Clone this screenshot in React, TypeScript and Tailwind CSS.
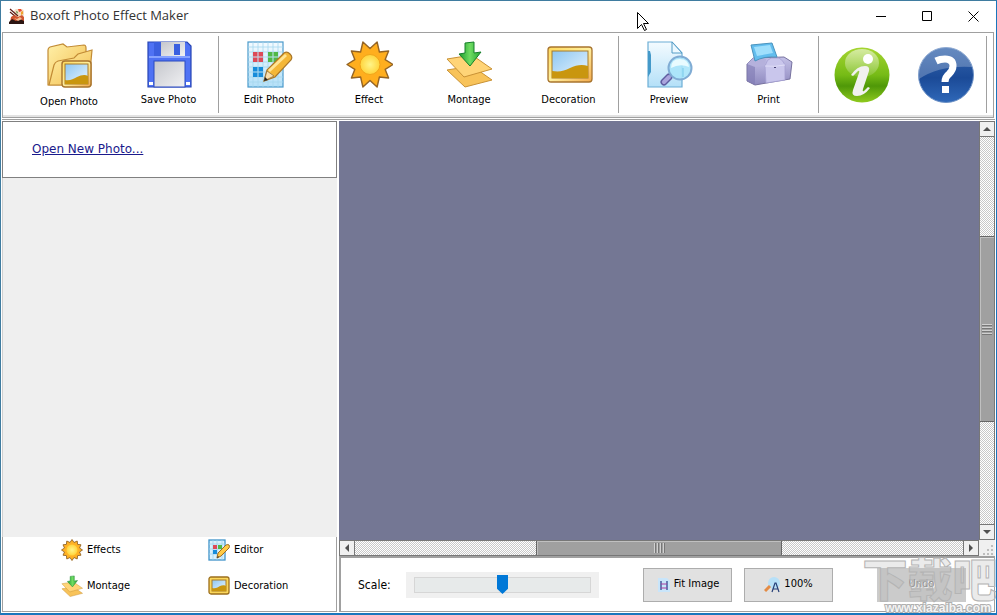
import { ReactNode } from "react";

type IconProps = { className?: string };

const AppIcon = () => (
  <svg viewBox="0 0 16 16" className="w-4 h-4" aria-hidden="true">
    <rect x="5" y="1" width="10" height="8" rx="3" fill="#f3dcc4" />
    <path d="M1 1l8 7M1 4l6 5" stroke="#5d1c16" strokeWidth="1.2" />
    <path d="M9 1h3l1 2-3 1z" fill="#e9482c" />
    <path d="M12 4l2-1v3l-2 1z" fill="#f0a22b" />
    <path d="M7 3l2 1-1 2z" fill="#4f8a3c" />
    <path d="M2 9l3-2 4 2 4-2 2 2v6H1z" fill="#d0552f" />
    <path d="M0 14l3-3 4 2 4-2 2 1 2 1v3H0z" fill="#2c1512" />
    <path d="M5 10l3 1 3-2 2 2-4 2z" fill="#f6bd92" />
  </svg>
);

const Gradients = () => (
  <svg className="absolute w-0 h-0" aria-hidden="true">
    <defs>
      <linearGradient id="gold" x1="0" y1="0" x2="1" y2="1">
        <stop offset="0" stopColor="#fff0a8" />
        <stop offset="1" stopColor="#f2bd4e" />
      </linearGradient>
      <linearGradient id="frame" x1="0" y1="0" x2="1" y2="1">
        <stop offset="0" stopColor="#ffd95a" />
        <stop offset="0.5" stopColor="#fff0a0" />
        <stop offset="1" stopColor="#f3a94b" />
      </linearGradient>
      <linearGradient id="sky" x1="0" y1="0" x2="1" y2="1">
        <stop offset="0" stopColor="#8dc6f2" />
        <stop offset="1" stopColor="#eaf6ff" />
      </linearGradient>
      <linearGradient id="sheet" x1="0" y1="0" x2="0" y2="1">
        <stop offset="0" stopColor="#f4fbff" />
        <stop offset="1" stopColor="#b4e0f8" />
      </linearGradient>
      <linearGradient id="metal" x1="0" y1="0" x2="1" y2="1">
        <stop offset="0" stopColor="#c4c6cc" />
        <stop offset="1" stopColor="#f1f1f3" />
      </linearGradient>
      <radialGradient id="sun">
        <stop offset="0" stopColor="#fff58a" />
        <stop offset="1" stopColor="#ffd43c" />
      </radialGradient>
      <linearGradient id="arrow" x1="0" y1="0" x2="1" y2="0">
        <stop offset="0" stopColor="#1c9c2c" />
        <stop offset="0.5" stopColor="#6fdc62" />
        <stop offset="1" stopColor="#25a534" />
      </linearGradient>
      <linearGradient id="printer" x1="0" y1="0" x2="0" y2="1">
        <stop offset="0" stopColor="#c4c1e8" />
        <stop offset="1" stopColor="#8f8abf" />
      </linearGradient>
      <linearGradient id="info" x1="0" y1="0" x2="0" y2="1">
        <stop offset="0" stopColor="#a5d531" />
        <stop offset="0.5" stopColor="#76bb16" />
        <stop offset="0.7" stopColor="#4f9808" />
        <stop offset="1" stopColor="#8fca1e" />
      </linearGradient>
      <linearGradient id="help" x1="0" y1="0" x2="0" y2="1">
        <stop offset="0" stopColor="#3566ad" />
        <stop offset="0.55" stopColor="#1b4a97" />
        <stop offset="1" stopColor="#2f68b8" />
      </linearGradient>
      <linearGradient id="gloss" x1="0" y1="0" x2="0" y2="1">
        <stop offset="0" stopColor="#ffffff" stopOpacity="0.55" />
        <stop offset="1" stopColor="#ffffff" stopOpacity="0.12" />
      </linearGradient>
    </defs>
  </svg>
);

const OpenIcon = ({ className }: IconProps) => (
  <svg viewBox="0 0 48 48" className={className} aria-hidden="true">
    <path d="M3 44V9q0-2 2-3l13-3 4 3 17-2q2 0 2 3v6L25 44z" fill="url(#gold)" stroke="#c28b35" strokeWidth="1.2" />
    <path d="M4 44l5-20q1-3 4-4l16-3 4-4 14-4-1 11v24H22z" fill="url(#gold)" stroke="#c28b35" strokeWidth="1.2" />
    <rect x="17" y="20" width="29" height="26" rx="3" fill="url(#frame)" stroke="#a8742e" strokeWidth="1.4" />
    <rect x="20" y="23" width="23" height="20" fill="url(#sky)" stroke="#a87a26" />
    <path d="M20 39c5 1 8-1 12-3 4-2 8-3 11-1v8H20z" fill="#c9960f" />
  </svg>
);

const SaveIcon = ({ className }: IconProps) => (
  <svg viewBox="0 0 48 48" className={className} aria-hidden="true">
    <path d="M3 2h39l4 4v41H3z" fill="#4f72f4" stroke="#2745b5" strokeWidth="1.2" />
    <rect x="9" y="2" width="7" height="14" fill="#3c60e0" />
    <rect x="16" y="2" width="24" height="14" fill="url(#metal)" />
    <rect x="29" y="4" width="6" height="11" fill="#3a5fe0" />
    <path d="M4 17h41" stroke="#86a2ff" strokeWidth="2" />
    <rect x="9" y="21" width="31" height="26" fill="url(#metal)" stroke="#2b4bc0" />
    <rect x="4" y="42" width="4" height="3" fill="#fff" />
    <rect x="41" y="42" width="4" height="3" fill="#fff" />
  </svg>
);

const EditIcon = ({ className }: IconProps) => (
  <svg viewBox="0 0 48 48" className={className} aria-hidden="true">
    <rect x="3" y="2" width="35" height="45" fill="url(#sheet)" stroke="#4a9acb" strokeWidth="1.2" />
    <path d="M8 2v45M13 2v45M18 2v45M23 2v45M28 2v45M33 2v45M3 7h35M3 12h35M3 17h35M3 22h35M3 27h35M3 32h35M3 37h35M3 42h35" stroke="#a5d7ef" strokeWidth=".8" />
    <path d="M8 12h4.500v4.500H8zM13.500 12H18v4.500h-4.500zM8 17.500h4.500V22H8zM13.500 17.500H18V22h-4.500z" fill="#dd4a58" />
    <path d="M23 12h4.500v4.500H23zM28.500 12H33v4.500h-4.500zM23 17.500h4.500V22H23zM28.500 17.500H33V22h-4.500z" fill="#51b848" />
    <path d="M8 27h4.500v4.500H8zM13.500 27H18v4.500h-4.500zM8 32.500h4.500V37H8zM13.500 32.500H18V37h-4.500z" fill="#168cda" />
    <path d="M19 41l3-11 17-17q3-2 6 1t1 6L30 37z" fill="#f4b738" stroke="#a97629" strokeWidth="1.2" />
    <path d="M24 31l17-16" stroke="#ffe596" strokeWidth="3" />
    <path d="M19 41l3-10 7 5z" fill="#f9dfad" stroke="#8a6a3a" strokeWidth=".7" />
    <path d="M19 41l1-4 3 3z" fill="#222" />
  </svg>
);

const SmallEditIcon = ({ className }: IconProps) => (
  <svg viewBox="0 0 22 22" className={className} aria-hidden="true">
    <rect x="1" y="1" width="16" height="20" fill="#d8f0fc" stroke="#3f93c9" strokeWidth="1.3" />
    <path d="M5 1v20M9 1v20M14 1v20M1 5h16M1 10h16M1 15h16" stroke="#a0d2ee" strokeWidth=".8" />
    <rect x="5" y="6" width="4" height="4" fill="#dd4a58" />
    <rect x="10" y="6" width="4" height="4" fill="#51b848" />
    <rect x="5" y="11" width="4" height="4" fill="#168cda" />
    <path d="M9 19l1-5 8-8q2-1 3 0t0 3l-8 8z" fill="#ffca45" stroke="#a06c22" />
    <path d="M9 19l1-2 1 1z" fill="#222" />
  </svg>
);

const SunIcon = ({ className }: IconProps) => (
  <svg viewBox="0 0 48 48" className={className} aria-hidden="true">
    <path
      d="M48 24.500L40.200 29.400 43.600 38 34.400 37 32.100 47 25 40.500 17.900 47 15.600 37 6.400 38 9.800 29.400 2 24.500 9.800 19.600 6.400 11 15.600 12 17.900 2 25 8.500 32.100 2 34.400 12 43.600 11 40.200 19.600z"
      fill="#ffae1e"
      stroke="#946425"
      strokeWidth="1.4"
      strokeLinejoin="round"
    />
    <circle cx="25" cy="24.500" r="10" fill="url(#sun)" stroke="#f0a51b" />
  </svg>
);

const SmallSunIcon = ({ className }: IconProps) => (
  <svg viewBox="0 0 22 22" className={className} aria-hidden="true">
    <path
      d="M21.500 11L18.500 13 20 16.200 16.600 16.600 16.200 20 13 18.500 11 21.500 9 18.500 5.800 20 5.400 16.600 2 16.200 3.500 13 .5 11 3.500 9 2 5.800 5.400 5.400 5.800 2 9 3.500 11 .5 13 3.500 16.200 2 16.600 5.400 20 5.800 18.500 9z"
      fill="#ffb224"
      stroke="#946425"
      strokeWidth=".9"
    />
    <circle cx="11" cy="11" r="5.500" fill="url(#sun)" />
  </svg>
);

const MontageIcon = ({ className }: IconProps) => (
  <svg viewBox="0 0 48 48" className={className} aria-hidden="true">
    <path d="M2 30l25-4 20 14-27 7z" fill="#f8c35a" stroke="#c99235" />
    <path d="M2 19l25-4 20 14-28 8z" fill="#ffd477" stroke="#c99235" />
    <path d="M20 3l9-1v11l7-1-11 14-11-12 6-1z" fill="url(#arrow)" stroke="#16802b" />
  </svg>
);

const DecorationIcon = ({ className }: IconProps) => (
  <svg viewBox="0 0 48 48" className={className} aria-hidden="true">
    <rect x="3" y="7" width="44" height="35" rx="3" fill="url(#frame)" stroke="#a8742e" strokeWidth="1.3" />
    <rect x="7" y="11" width="36" height="27" fill="url(#sky)" stroke="#a87a26" />
    <path d="M7 31c8 1 12 0 18-3 6-3 12-4 18-2v12H7z" fill="#c9960f" />
  </svg>
);

const SmallDecorationIcon = ({ className }: IconProps) => (
  <svg viewBox="0 0 22 22" className={className} aria-hidden="true">
    <rect x="1" y="2" width="20" height="17" rx="2" fill="#fbd75a" stroke="#9c6f1c" strokeWidth="1.3" />
    <rect x="4" y="5" width="14" height="11" fill="url(#sky)" stroke="#a87a26" />
    <path d="M4 13c4 1 6-1 8-2s5-1 6 0v5H4z" fill="#c9960f" />
  </svg>
);

const PreviewIcon = ({ className }: IconProps) => (
  <svg viewBox="0 0 48 48" className={className} aria-hidden="true">
    <path d="M3 2h24l10 11v34H3z" fill="url(#sheet)" stroke="#6caed5" strokeWidth="1.2" />
    <path d="M27 2v11h10z" fill="#edf9ff" stroke="#549cc6" />
    <path d="M3 11h2l1 4v17l-3 5z" fill="#4499c9" />
    <path d="M24 37l-5 5" stroke="#5f5da0" strokeWidth="7" strokeLinecap="round" />
    <path d="M24 37l-5 5" stroke="#aaa4dd" strokeWidth="4" strokeLinecap="round" />
    <circle cx="35" cy="28" r="11.500" fill="#a9e4fa" fillOpacity=".9" stroke="#80acd4" strokeWidth="2" />
    <path d="M26 28q0-9 9-9 8 0 9 8-9-4-18 1z" fill="#e8fbff" />
    <path d="M38 28v9" stroke="#79caea" />
  </svg>
);

const PrintIcon = ({ className }: IconProps) => (
  <svg viewBox="0 0 48 48" className={className} aria-hidden="true">
    <path d="M2 24l6-6 31-1 8 5-2 17-12 2-23 4-8-4z" fill="url(#printer)" stroke="#77729f" strokeLinejoin="round" />
    <path d="M2 24l8 3 10-1 1-7-13-1z" fill="#b5b1dc" />
    <path d="M10 27v18l-8-4V24z" fill="#7f7ab2" opacity=".6" />
    <path d="M20 26q2-7 6-8h8q4 2 6 7v15l-19 3z" fill="#c9c6ec" stroke="#a5a0d2" strokeWidth=".8" />
    <path d="M20 26q10 1 20-1" fill="none" stroke="#dedcf6" />
    <path d="M6 5l21-2 5 14q-13-1-22 4z" fill="#62bdee" stroke="#4a93bd" />
    <path d="M9 7l16-2 3 8-16 3z" fill="#9fdffc" />
    <rect x="29" y="27" width="2" height="1" fill="#44406f" />
  </svg>
);

const InfoIcon = () => (
  <svg viewBox="0 0 56 56" className="w-14 h-14" aria-hidden="true">
    <circle cx="28" cy="28" r="27.500" fill="url(#info)" />
    <ellipse cx="28" cy="16" rx="17" ry="14" fill="url(#gloss)" />
    <circle cx="34" cy="12" r="5" fill="#fff" />
    <path d="M17 28q6-9 14-9 5 0 4 5l-6 18q-1 3 1 2l4-4 2 1q-6 8-13 8-6 0-4-6l6-17q1-3-1-2l-5 5z" fill="#f1f1ef" />
  </svg>
);

const HelpIcon = () => (
  <svg viewBox="0 0 56 56" className="w-14 h-14" aria-hidden="true">
    <circle cx="28" cy="28" r="27.500" fill="url(#help)" stroke="#6d91c5" />
    <path d="M1 32A27 27 0 0 1 54 20Q22 18 1 32z" fill="#fff" opacity=".24" />
    <path d="M18 14q4-2 9-2 8 0 8 7 0 4-4 8-4 3-4 8" fill="none" stroke="#fff" strokeWidth="7" />
    <rect x="24" y="39" width="7" height="7" fill="#fff" />
  </svg>
);

const FitIcon = () => (
  <svg viewBox="0 0 16 16" className="w-4 h-4" aria-hidden="true">
    <path d="M2 1h9l3 3v11H2z" fill="#c9e5fa" />
    <path d="M5 4v9M11 4v9" stroke="#263888" strokeWidth="1.200" />
    <path d="M5 7h6M5 11h6" stroke="#a83ca0" />
  </svg>
);

const ZoomIcon = () => (
  <svg viewBox="0 0 16 16" className="w-4 h-4" aria-hidden="true">
    <circle cx="10" cy="6" r="6" fill="#b7e0f8" />
    <path d="M1 14l5-5" stroke="#e38b45" strokeWidth="3" />
    <path d="M8 15l3-9h1l3 9M9 12h5" fill="none" stroke="#263f78" strokeWidth="1.200" />
  </svg>
);

type ToolProps = { label: string; icon: ReactNode; last?: boolean };

const Tool = ({ label, icon, last }: ToolProps) => (
  <button
    type="button"
    className={`w-[100px] flex flex-col items-center gap-1 pt-1 ${last ? "border-r border-[#a0a0a0]" : ""}`}
  >
    {icon}
    <span className="leading-4">{label}</span>
  </button>
);

const Toolbar = () => (
  <nav className="ml-px mr-[2px] mt-px border border-[#a0a0a0] h-[86px] pt-[3px] pb-1 pl-4 pr-[6px] flex justify-between shadow-[inset_0_-2px_0_#e3e3e3]">
    <div className="flex">
      <Tool label="Open Photo" icon={<OpenIcon className="w-12 h-[50px]" />} />
      <Tool label="Save Photo" icon={<SaveIcon className="w-12 h-12" />} last />
      <Tool label="Edit Photo" icon={<EditIcon className="w-12 h-12" />} />
      <Tool label="Effect" icon={<SunIcon className="w-12 h-12" />} />
      <Tool label="Montage" icon={<MontageIcon className="w-12 h-12" />} />
      <Tool label="Decoration" icon={<DecorationIcon className="w-12 h-12" />} last />
      <Tool label="Preview" icon={<PreviewIcon className="w-12 h-12" />} />
      <Tool label="Print" icon={<PrintIcon className="w-12 h-12" />} last />
    </div>
    <div className="flex items-center gap-7 pr-3 border-r border-[#a0a0a0]">
      <button type="button" aria-label="About">
        <InfoIcon />
      </button>
      <button type="button" aria-label="Help">
        <HelpIcon />
      </button>
    </div>
  </nav>
);

const TitleBar = () => (
  <header className="h-[30px] shrink-0 flex items-center pl-2">
    <AppIcon />
    <h1 className="flex-1 pl-[5px] text-[13px] text-[#333] font-['Open_Sans','Noto_Sans',sans-serif]">
      Boxoft Photo Effect Maker
    </h1>
    <button type="button" aria-label="Minimize" className="w-[46px] h-7 flex items-center justify-center">
      <svg viewBox="0 0 11 11" className="w-[11px] h-[11px]">
        <path d="M0 5.500h10" stroke="#000" />
      </svg>
    </button>
    <button type="button" aria-label="Maximize" className="w-[46px] h-7 flex items-center justify-center">
      <svg viewBox="0 0 11 11" className="w-[11px] h-[11px]">
        <path d="M.5.5h9v9h-9z" fill="none" stroke="#000" />
      </svg>
    </button>
    <button type="button" aria-label="Close" className="w-[46px] h-7 flex items-center justify-center">
      <svg viewBox="0 0 11 11" className="w-[11px] h-[11px]">
        <path d="M.5.5l10 10M10.500.5l-10 10" stroke="#000" />
      </svg>
    </button>
  </header>
);

const modes = [
  { label: "Effects", icon: <SmallSunIcon className="w-[22px] h-[22px]" /> },
  { label: "Editor", icon: <SmallEditIcon className="w-[22px] h-[22px]" /> },
  { label: "Montage", icon: <MontageIcon className="w-[22px] h-[22px]" /> },
  { label: "Decoration", icon: <SmallDecorationIcon className="w-[22px] h-[22px]" /> },
];

const Sidebar = () => (
  <aside className="w-[335px] shrink-0 flex flex-col">
    <div className="h-[57px] border border-[#808080] bg-white flex items-center pl-[29px] pb-[2px]">
      <a href="#open" className="text-[12px] text-[#1a1a8c] underline font-['DejaVu_Sans',sans-serif]">
        Open New Photo...
      </a>
    </div>
    <div className="flex-1 bg-[#efefef] border-l border-[#d0d0d0]" />
    <div className="h-[75px] grid grid-cols-[147px_1fr] content-start gap-y-[14px] pt-[2px] pl-[58px] border-x border-b border-[#a0a0a0]">
      {modes.map((mode) => (
        <button key={mode.label} type="button" className="flex items-center gap-1">
          {mode.icon}
          {mode.label}
        </button>
      ))}
    </div>
  </aside>
);

const track =
  "bg-[repeating-conic-gradient(#c8c8c8_0_25%,#ffffff_0_50%)] bg-[length:2px_2px]";

type ArrowProps = { label: string; d: string };

const ArrowButton = ({ label, d }: ArrowProps) => (
  <button
    type="button"
    aria-label={label}
    className="w-4 h-4 shrink-0 border border-[#777] bg-[#f0f0f0] flex items-center justify-center"
  >
    <svg viewBox="0 0 8 8" className="w-2 h-2">
      <path d={d} fill="#505050" />
    </svg>
  </button>
);

const VerticalScroll = () => (
  <div className="w-4 shrink-0 flex flex-col">
    <ArrowButton label="Scroll up" d="M0 6l4-4 4 4z" />
    <div className={`flex-1 flex flex-col border-x border-[#777] ${track}`}>
      <div className="flex-[99]" />
      <div className="flex-[185] bg-[#a0a0a0] border-y border-[#666] shadow-[inset_1px_1px_0_#c0c0c0] flex flex-col items-center justify-center gap-[2px]">
        {[0, 1, 2, 3].map((line) => (
          <div key={line} className="w-[10px] h-px bg-[#d0d0d0] shadow-[0_1px_0_#777]" />
        ))}
      </div>
      <div className="flex-[102]" />
    </div>
    <ArrowButton label="Scroll down" d="M0 2h8l-4 4z" />
  </div>
);

const HorizontalScroll = () => (
  <div className="h-4 shrink-0 flex">
    <ArrowButton label="Scroll left" d="M6 0v8l-4-4z" />
    <div className={`flex-1 flex border-y border-[#777] ${track}`}>
      <div className="flex-[181]" />
      <div className="flex-[244] bg-[#a0a0a0] border-x border-[#666] shadow-[inset_1px_1px_0_#c0c0c0] flex items-center justify-center gap-[2px]">
        {[0, 1, 2, 3].map((line) => (
          <div key={line} className="w-px h-[10px] bg-[#d0d0d0] shadow-[1px_0_0_#777]" />
        ))}
      </div>
      <div className="flex-[181]" />
    </div>
    <ArrowButton label="Scroll right" d="M2 0l4 4-4 4z" />
    <div className="w-4 flex items-end justify-end pr-px bg-[#f0f0f0]">
      <svg viewBox="0 0 12 12" className="w-3 h-3" aria-hidden="true">
        <path d="M9 1h2v2H9zM5 5h2v2H5zM9 5h2v2H9zM1 9h2v2H1zM5 9h2v2H5zM9 9h2v2H9z" fill="#bdbdbd" />
      </svg>
    </div>
  </div>
);

const ScaleBar = () => (
  <footer className="relative h-14 shrink-0 border-2 border-r border-b border-[#a0a0a0] flex items-center pl-[17px] pr-7">
    <label htmlFor="scale" className="w-12 text-[12px]">
      Scale:
    </label>
    <div className="w-[193px] h-[26px] px-2 bg-[#f0f0f0] flex items-center">
      <input
        id="scale"
        type="range"
        defaultValue={50}
        className="w-full h-4 appearance-none bg-[#e7eaea] border border-[#d6d6d6] [&::-webkit-slider-thumb]:appearance-none [&::-webkit-slider-thumb]:w-[11px] [&::-webkit-slider-thumb]:h-[19px] [&::-webkit-slider-thumb]:bg-[#0078d7] [&::-webkit-slider-thumb]:[clip-path:polygon(0_0,100%_0,100%_72%,50%_100%,0_72%)]"
      />
    </div>
    <div className="flex-1 flex justify-end gap-3">
      <button type="button" className="w-[89px] h-[34px] border border-[#adadad] bg-[#e1e1e1] flex items-center justify-center gap-[2px]">
        <FitIcon />
        Fit Image
      </button>
      <button type="button" className="w-[89px] h-[34px] border border-[#adadad] bg-[#e1e1e1] flex items-center justify-center gap-1">
        <ZoomIcon />
        100%
      </button>
      <button type="button" disabled className="w-[89px] h-[34px] ml-8 bg-[#cbcbcb] text-[#8a8a8a] [text-shadow:1px_1px_0_#fff]">
        Undo
      </button>
    </div>
    <div className="absolute -right-1 top-1 w-[136px] flex flex-col items-center pointer-events-none">
      <span className="text-[45px] leading-[40px] font-black whitespace-nowrap text-[#b0b0b0]/25 [-webkit-text-stroke:1px_#b4b4b4] font-['Liberation_Sans','Noto_Sans_CJK_SC',sans-serif]">
        下载吧
      </span>
      <span className="text-[12px] leading-3 font-bold pl-4 text-[#f4f4f4] [-webkit-text-stroke:2px_#b0b0b0] [paint-order:stroke] font-['Liberation_Sans',sans-serif]">
        www.xiazaiba.com
      </span>
    </div>
  </footer>
);

const App = () => {
  return (
    <div className="relative h-screen flex flex-col overflow-hidden bg-white border border-t-[#3f7ca0] border-l-[#3f7ca0] border-r-[#1976bd] border-b-2 border-b-[#1976bd] text-[11px] text-black font-['DejaVu_Sans_Condensed','Noto_Sans',sans-serif]">
      <Gradients />
      <TitleBar />
      <Toolbar />
      <main className="flex-1 min-h-0 flex gap-[2px] mt-px mx-px pt-px border-t border-[#a0a0a0] pb-px">
        <Sidebar />
        <section className="flex-1 min-w-0 flex flex-col">
          <div className="flex-1 min-h-0 flex">
            <div className="flex-1 bg-[#747794]" />
            <VerticalScroll />
          </div>
          <HorizontalScroll />
          <ScaleBar />
        </section>
      </main>
      <svg viewBox="0 0 12 19" className="absolute left-[636px] top-[11px] w-3 h-[19px]" aria-hidden="true">
        <path d="M.5.5v16l4-4 3 6 2-1-3-6h5z" fill="#fff" stroke="#000" />
      </svg>
    </div>
  );
};

export default App;
